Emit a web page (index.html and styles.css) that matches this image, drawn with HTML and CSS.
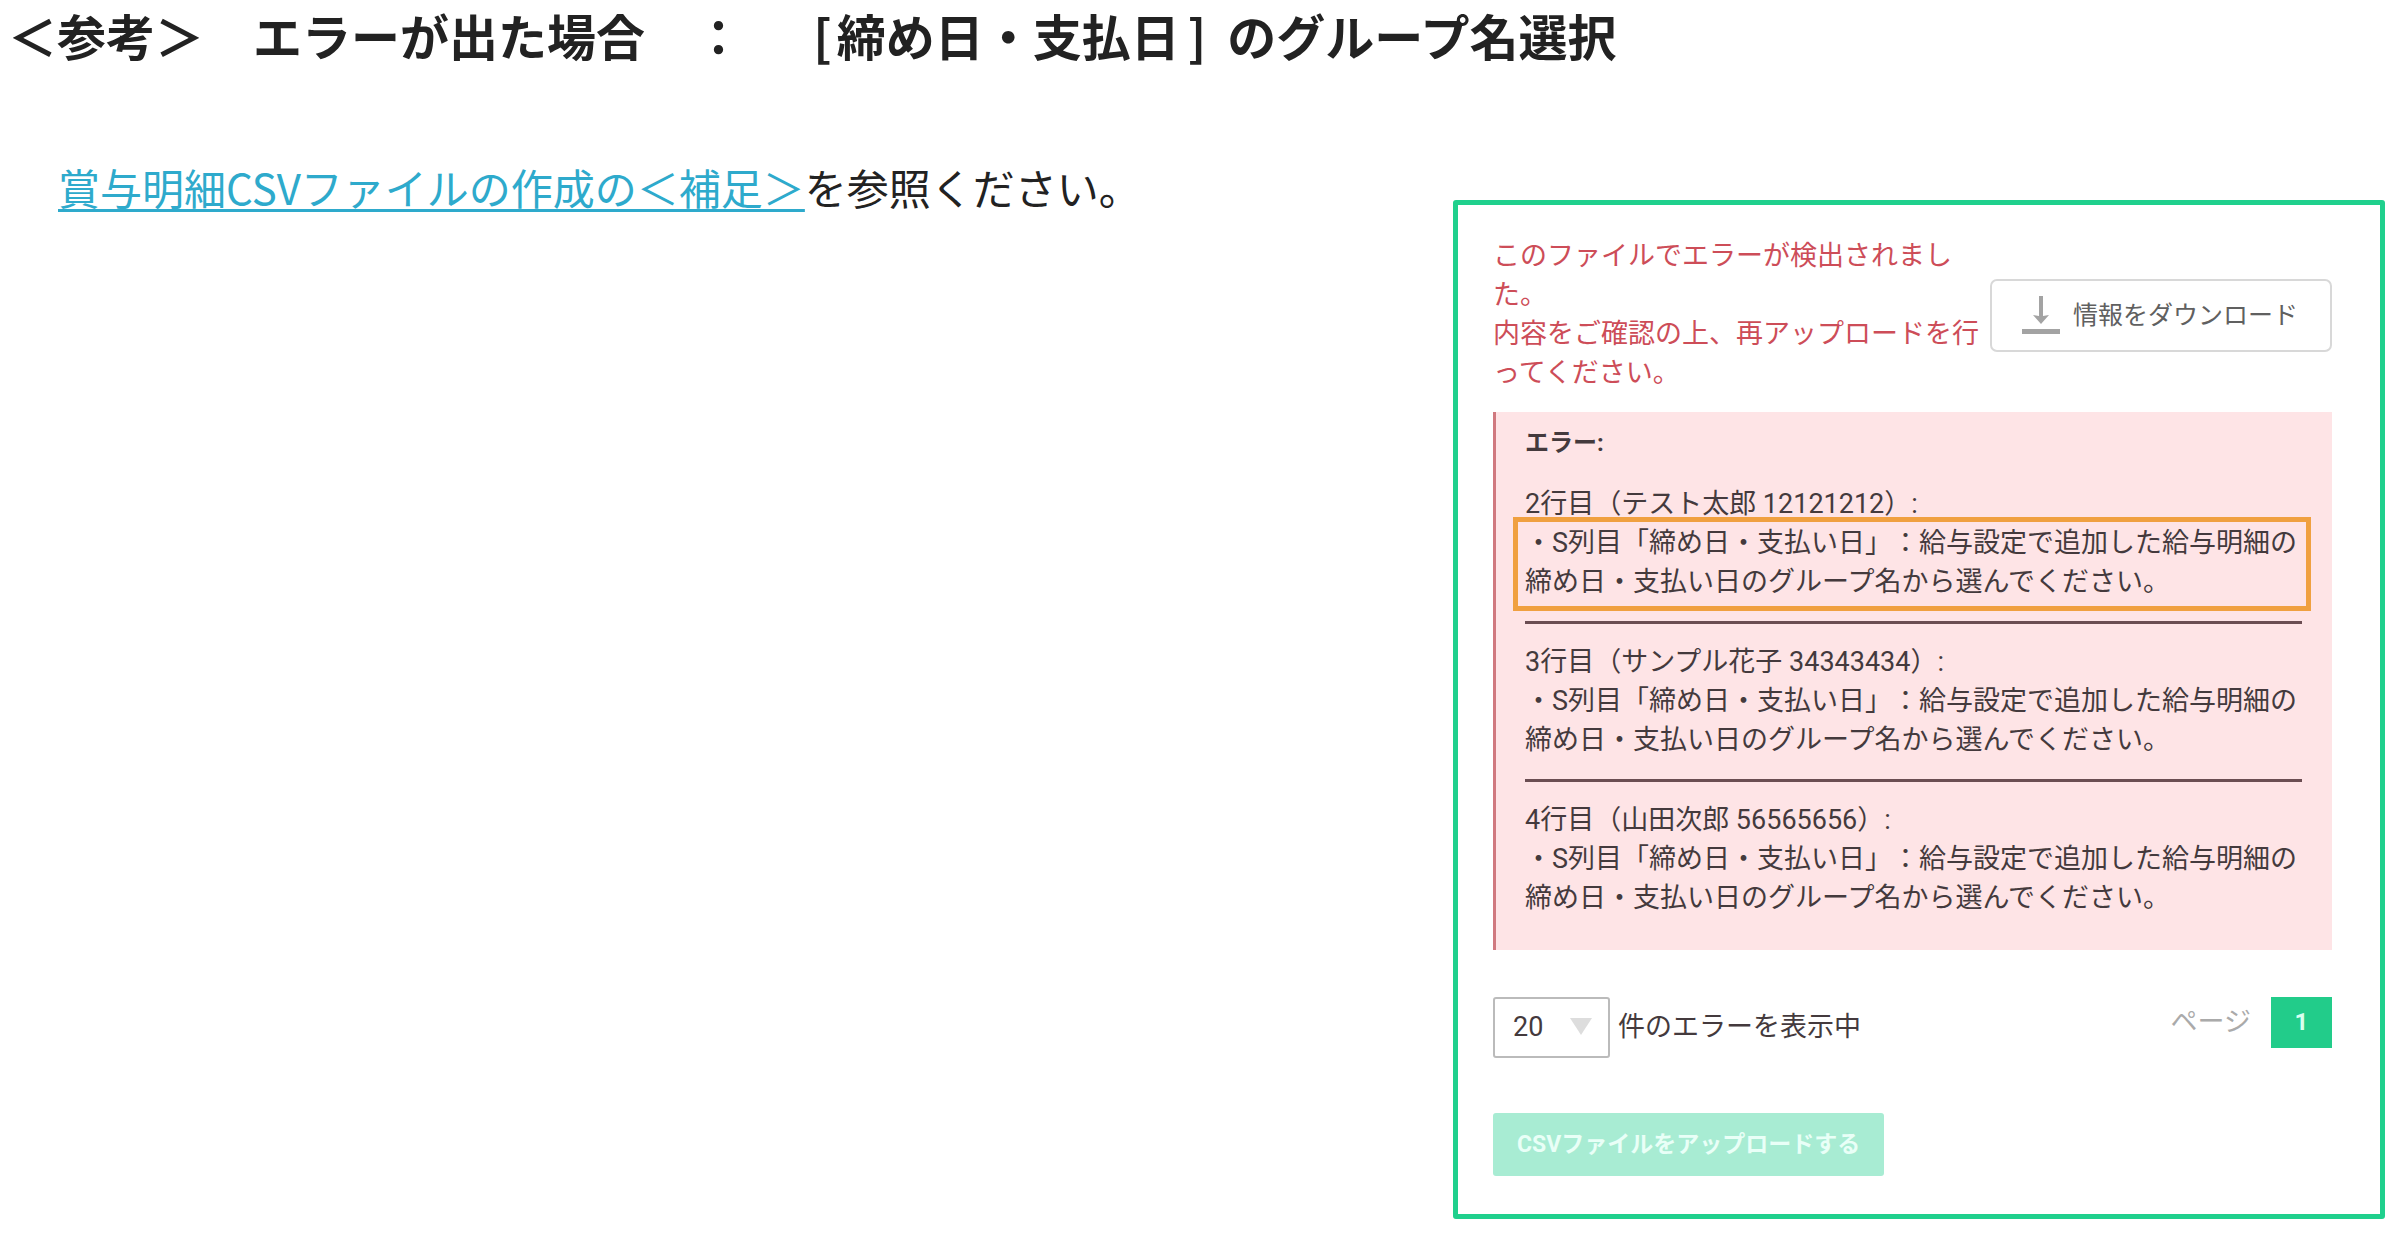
FILE: index.html
```html
<!DOCTYPE html>
<html lang="ja">
<head>
<meta charset="utf-8">
<meta name="viewport" content="width=device-width, initial-scale=1">
<title>＜参考＞ エラーが出た場合</title>
<link rel="stylesheet" href="styles.css">
</head>
<body>
<main class="page">
  <h1 class="title">＜参考＞　エラーが出た場合　：　 <span class="bracket-open">[</span>締め日・支払日<span class="bracket-close">]</span> のグループ名選択</h1>
  <div class="columns">
    <p class="lead"><a class="lead-link" href="#supplement">賞与明細CSVファイルの作成の＜補足＞</a>を参照ください。</p>
    <section class="panel">
      <div class="summary">
        <p class="alert">このファイルでエラーが検出されました。<br>内容をご確認の上、再アップロードを行ってください。</p>
        <button class="download" type="button">
          <svg class="download-icon" viewBox="0 0 38 38" aria-hidden="true">
            <path d="M17 0h4v20l6-1-8 9-8-9 6 1zM0 33h38v5H0z" fill="currentColor"/>
          </svg>
          情報をダウンロード
        </button>
      </div>
      <div class="errors">
        <h2 class="errors-title">エラー:</h2>
        <ul class="error-list">
          <li class="error">
            <p>2行目（テスト太郎 12121212）:</p>
            <p class="detail marked">・S列目「締め日・支払い日」：給与設定で追加した給与明細の締め日・支払い日のグループ名から選んでください。</p>
          </li>
          <li class="error">
            <p>3行目（サンプル花子 34343434）:</p>
            <p class="detail">・S列目「締め日・支払い日」：給与設定で追加した給与明細の締め日・支払い日のグループ名から選んでください。</p>
          </li>
          <li class="error">
            <p>4行目（山田次郎 56565656）:</p>
            <p class="detail">・S列目「締め日・支払い日」：給与設定で追加した給与明細の締め日・支払い日のグループ名から選んでください。</p>
          </li>
        </ul>
      </div>
      <div class="pager">
        <div class="count">
          <span class="select-box">
            <select class="select" id="per-page"><option>20</option></select>
          </span>
          <label for="per-page">件のエラーを表示中</label>
        </div>
        <nav class="pages">
          <span>ページ</span>
          <a class="page-number" href="#page-1">1</a>
        </nav>
      </div>
      <button class="upload" type="button">CSVファイルをアップロードする</button>
    </section>
  </div>
</main>
</body>
</html>
```
FILE: styles.css
```css
* {
  box-sizing: border-box;
}

body {
  margin: 0;
  background: #fff;
  color: #222;
  font-family: "Noto Sans CJK JP", sans-serif;
  text-spacing-trim: space-all;
}

h1, h2, p, ul {
  margin: 0;
  padding: 0;
}

.page {
  padding: 5px 15px 15px 8px;
}

.title {
  font-size: 49px;
  line-height: 60px;
  font-weight: 700;
}

.bracket-open {
  padding: 0 5px 0 10px;
}

.bracket-close {
  padding: 0 10px 0 8px;
}

.columns {
  display: flex;
  align-items: flex-start;
  justify-content: space-between;
}

.lead {
  padding: 92px 0 0 50px;
  font-size: 42px;
  line-height: 60px;
}

.lead-link {
  color: #2eaacc;
  text-decoration-thickness: 3px;
  text-underline-offset: 4px;
  text-decoration-skip-ink: none;
}

.panel {
  flex: 0 1 932px;
  margin-top: 135px;
  padding: 32px 48px 38px 35px;
  border: 5px solid #20d08d;
  border-radius: 3px;
  color: #443a3d;
  font-family: Roboto, "Noto Sans CJK JP", sans-serif;
  font-size: 27px;
  line-height: 39px;
}

.summary {
  display: flex;
  align-items: center;
  justify-content: space-between;
  gap: 6px;
}

.alert {
  color: #cd4d58;
}

.download {
  display: flex;
  flex: none;
  align-items: center;
  gap: 13px;
  height: 73px;
  padding: 0 32px 0 30px;
  border: 2px solid #d8d8d8;
  border-radius: 7px;
  background: #fff;
  color: #606060;
  font: inherit;
  font-size: 25px;
}

.download-icon {
  width: 38px;
  height: 38px;
  color: #a3a3a3;
}

.errors {
  margin-top: 19px;
  padding: 12px 30px 32px 29px;
  border-left: 3px solid #d0797f;
  background: #fee4e6;
}

.errors-title {
  margin-bottom: 22px;
  font-size: 24px;
  line-height: 39px;
  font-weight: 700;
}

.error-list {
  list-style: none;
}

.error + .error {
  margin-top: 19px;
  padding-top: 19px;
  border-top: 3px solid #6b4d52;
}

.detail {
  position: relative;
}

.marked::after {
  content: "";
  position: absolute;
  inset: -7px -9px -9px -12px;
  border: 5px solid #f0a040;
}

.pager {
  display: flex;
  align-items: flex-start;
  justify-content: space-between;
  margin-top: 47px;
}

.count {
  display: flex;
  align-items: center;
  gap: 8px;
}

.select-box {
  position: relative;
}

.select-box::after {
  content: "";
  position: absolute;
  top: 21px;
  right: 18px;
  border: 11px solid transparent;
  border-top: 17px solid #ddd;
  border-bottom: 0;
  pointer-events: none;
}

.select {
  display: block;
  width: 117px;
  height: 61px;
  padding: 0 18px;
  border: 2px solid #bbb;
  border-radius: 3px;
  background: #fff;
  color: inherit;
  font: inherit;
  appearance: none;
}

.pages {
  display: flex;
  align-items: center;
  gap: 20px;
  color: #aaa;
}

.page-number {
  width: 61px;
  background: #22cc8a;
  color: #d8fff0;
  font-size: 24px;
  line-height: 51px;
  font-weight: 700;
  text-align: center;
  text-decoration: none;
}

.upload {
  display: block;
  height: 63px;
  margin-top: 55px;
  padding: 0 24px;
  border: 0;
  border-radius: 3px;
  background: #a8ecd3;
  color: #e9fff7;
  font: inherit;
  font-size: 23px;
  font-weight: 700;
}
```
